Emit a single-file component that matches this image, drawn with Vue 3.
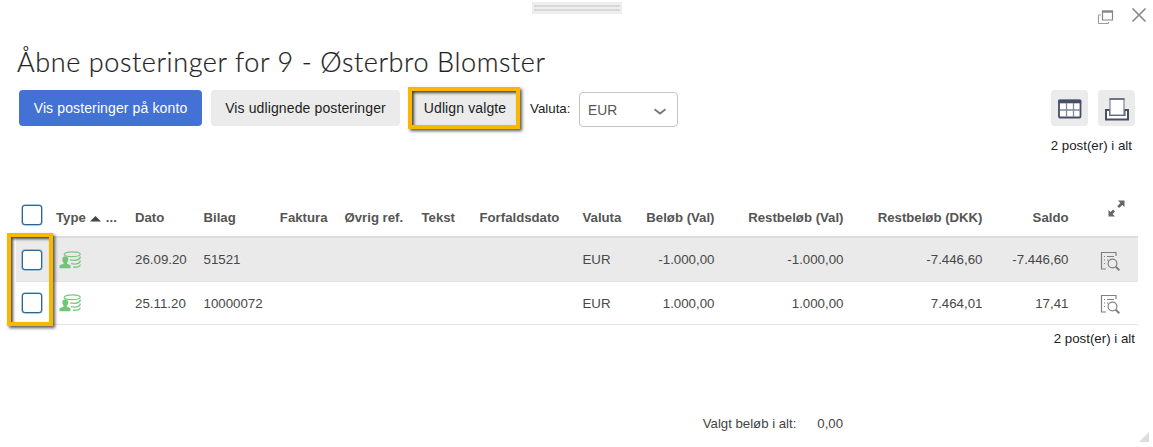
<script setup>
const columns = [
  { key: 'dato', label: 'Dato' },
  { key: 'bilag', label: 'Bilag' },
  { key: 'faktura', label: 'Faktura', cls: 'num' },
  { key: 'ref', label: 'Øvrig ref.', cls: 'ref' },
  { key: 'tekst', label: 'Tekst' },
  { key: 'forfald', label: 'Forfaldsdato' },
  { key: 'valuta', label: 'Valuta' },
  { key: 'belob', label: 'Beløb (Val)', cls: 'num' },
  { key: 'rest', label: 'Restbeløb (Val)', cls: 'num' },
  { key: 'restDkk', label: 'Restbeløb (DKK)', cls: 'num' },
  { key: 'saldo', label: 'Saldo', cls: 'num' },
]
const rows = [
  { dato: '26.09.20', bilag: '51521', valuta: 'EUR', belob: '-1.000,00', rest: '-1.000,00', restDkk: '-7.446,60', saldo: '-7.446,60' },
  { dato: '25.11.20', bilag: '10000072', valuta: 'EUR', belob: '1.000,00', rest: '1.000,00', restDkk: '7.464,01', saldo: '17,41' },
]
</script>

<template>
  <main class="window">
    <div class="handle"><i></i><i></i></div>
    <div class="controls">
      <svg width="17" height="15" viewBox="0 0 17 15" fill="none" stroke="#858585">
        <path d="M5.500 1.500h10v8.500h-10z" stroke-width="1.200" /><path d="M5 1.500h11" stroke-width="2.400" />
        <path d="M4 5H1.500v8.500h10v-1.500" stroke="#999" />
      </svg>
      <svg width="16" height="16" viewBox="0 0 16 16" fill="none" stroke="#8a8a8a" stroke-width="1.700"><path d="M1.500 1.500l13 13M14.500 1.500l-13 13" /></svg>
    </div>

    <h1>Åbne posteringer for 9 - Østerbro Blomster</h1>

    <div class="toolbar">
      <button class="btn primary">Vis posteringer på konto</button>
      <button class="btn second">Vis udlignede posteringer</button>
      <button class="btn third">Udlign valgte</button>
      <span class="label">Valuta:</span>
      <div class="select">
        <span>EUR</span>
        <svg width="14" height="8" viewBox="0 0 14 8" fill="none" stroke="#777" stroke-width="1.800"><path d="M1.500 1.200L7 5.500l5.500-4.300" /></svg>
      </div>
      <div class="tools">
        <button class="tool">
          <svg width="24" height="20" viewBox="0 0 24 20"><rect x="1" y="1.500" width="21.500" height="17" rx="1" fill="#fff" stroke="#484e66" stroke-width="1.800" /><path d="M.2 2.500h23" stroke="#484e66" stroke-width="3.600" /><path d="M8.500 4v14M15.500 4v14M2 11h20" stroke="#8287a0" stroke-width="1.300" /></svg>
        </button>
        <button class="tool">
          <svg width="26" height="24" viewBox="0 0 26 24"><path d="M6 13H2v9.500h22V13h-3.500v5H6z" fill="#fff" stroke="#484e66" stroke-width="2" /><path d="M6 2h14v16H6z" fill="#fff" stroke="#8084a0" stroke-width="1.200" /><path d="M5.500 2h15" stroke="#484e66" stroke-width="1.300" /></svg>
        </button>
      </div>
    </div>
    <div class="count top">2 post(er) i alt</div>

    <section class="table">
      <div class="row head">
        <div><span class="check"></span></div>
        <div class="type">Type<svg width="11" height="6" viewBox="0 0 11 6"><path d="M5.500 0L11 5.500H0z" fill="#444" /></svg><span>...</span></div>
        <div v-for="c in columns" :key="c.key" :class="c.cls">{{ c.label }}</div>
        <div class="action expand">
          <svg width="17" height="17" viewBox="0 0 17 17" fill="#666">
            <path d="M10 .5h6.500V7l-2.100-2.100-3.300 3.200-1.900-1.900 3.200-3.300zM7 16.500H.5V10l2.100 2.100 2.500-2.500L7 11.500l-2.400 2.600z" />
          </svg>
        </div>
      </div>
      <div v-for="(r, i) in rows" :key="r.bilag" class="row entry" :class="{ shaded: i === 0 }">
        <div><span class="check"></span></div>
        <div class="kind">
          <svg width="23" height="18" viewBox="0 0 23 18">
            <g fill="none" stroke="#7cc87e" stroke-width="1.300"><ellipse cx="13.200" cy="3.300" rx="8" ry="2.400" /><path d="M21.300 5.500c0 4-5.500 4.200-10.300 3.400M21.300 9.500c0 3.500-4.500 4-9.300 3.200M21.300 13.500c0 2.500-3.500 3-7.300 2.600" /></g>
            <path d="M6.300 5.200c2 0 3.100 1.300 3 3.200-.1 1.500-.7 2.300-1.200 3.100v1.300l3.300 1.500v2.900H.5v-2.900l4-1.500v-1.300c-.6-.8-1.100-1.600-1.200-3.100-.1-1.900 1-3.200 3-3.200z" fill="#72c476" />
          </svg>
        </div>
        <div v-for="c in columns" :key="c.key" :class="c.cls">{{ r[c.key] }}</div>
        <div class="action">
          <svg width="20" height="20" viewBox="0 0 20 20" fill="none" stroke="#808080">
            <path d="M6 18H1.500V1.500H16V5M1 1.500h15.500" stroke-width="1.200" /><path d="M4 5.500h1M4 9h1M4 12.500h1M7 5.500h7M7 9h1.500" />
            <circle cx="12.500" cy="12.500" r="4.400" stroke-width="1.200" /><path d="M15.800 15.800l3.500 3.500" stroke-width="2" />
          </svg>
        </div>
      </div>
    </section>
    <div class="count bottom">2 post(er) i alt</div>
    <footer><span>Valgt beløb i alt:</span><span class="sum">0,00</span></footer>

    <div class="mark mark-button"></div>
    <div class="mark mark-checks"></div>
    <div class="grip"></div>
  </main>
</template>

<style>
body { margin: 0; background: #fff; }
</style>

<style scoped>
* { box-sizing: border-box; }
.window { position: relative; width: 1153px; height: 447px; overflow: hidden; background: #fff; font: 13.3px "Liberation Sans", Arial, sans-serif; color: #222; }
.handle { position: absolute; left: 532px; top: 2px; width: 90px; height: 12px; padding: 3px 2px; background: #eee; display: flex; flex-direction: column; gap: 2px; }
.handle i { height: 2px; background: #d8d8d8; }
.controls { position: absolute; top: 5px; right: 6px; display: flex; gap: 17px; align-items: center; }
.controls svg:first-child { margin-top: 5px; }
svg { display: block; flex: none; }
h1 { margin: 0; padding: 44px 0 0 17px; height: 90px; font: 300 27px/36px Lato, sans-serif; letter-spacing: .6px; -webkit-text-stroke: .2px #222; color: #222; white-space: nowrap; }
.toolbar { height: 37px; display: flex; align-items: flex-start; padding-left: 19px; }
.btn { height: 36px; border: 0; border-radius: 4px; background: #ebebeb; color: #222; font: 14px "Liberation Sans", Arial, sans-serif; letter-spacing: .12px; padding: 0; white-space: nowrap; }
.primary { width: 183px; background: #4472d4; color: #fff; }
.second { width: 189px; margin-left: 9px; }
.third { width: 108px; margin-left: 11px; margin-right: -1px; }
.label { width: 40px; margin: 10px 0 0 12px; line-height: 18px; white-space: nowrap; }
.select { width: 99px; height: 35px; margin: 2px 0 0 9px; border: 1px solid #c4c4c4; border-radius: 4px; display: flex; align-items: center; justify-content: space-between; padding: 1px 10px 0 8px; font-size: 13.8px; color: #555; }
.select svg { margin-top: 3px; }
.tools { margin-left: auto; margin-right: 18px; display: flex; gap: 10px; }
.tool { width: 37px; height: 36px; border: 0; border-radius: 4px; background: #ebebeb; padding: 1px 0 0; display: flex; justify-content: center; align-items: center; }
.count { text-align: right; line-height: 18px; }
.top { padding: 10px 21px 0 0; height: 67px; }
.bottom { padding: 5px 18px 0 0; }
.table { width: 1122px; margin-left: 16px; color: #484848; }
.row { display: grid; grid-template-columns: 40px 79px 68.500px 69px 55px 94px 58px 103px 57px 75px 129px 139px 86px 69.500px; align-items: center; white-space: nowrap; }
.head { height: 44px; border-bottom: 2px solid #dcdcdc; font-weight: bold; font-size: 13.2px; color: #555; padding-top: 5px; }
.entry { height: 43px; border-bottom: 1px solid #e4e4e4; }
.entry.shaded { height: 44px; background: #eaeaea; }
.num { display: flex; justify-content: flex-end; }
.ref { padding-left: 17px; }
.check { display: block; width: 20px; height: 20px; margin-left: 6px; border: 1px solid #286795; box-shadow: 0 0 0 .5px #5e90b3; border-radius: 3px; background: #fff; }
.head .check { margin-top: -5px; }
.type { display: flex; align-items: center; }
.type svg { margin: 2px 5px 0 4px; }
.kind { padding-left: 3px; }
.action { padding-left: 31px; padding-top: 2px; }
.expand { padding-left: 39px; margin-top: -21px; }
footer { display: flex; justify-content: flex-end; width: 843px; margin-top: 67px; line-height: 18px; color: #444; font-size: 13.2px; }
.sum { margin-left: 21px; }
.mark { position: absolute; border: 4px solid #f9b800; box-shadow: 2px 2px 3px rgba(0, 0, 0, .65), inset 2px 2px 3px rgba(0, 0, 0, .7); }
.mark-button { left: 408px; top: 87px; width: 112px; height: 42px; }
.mark-checks { left: 7px; top: 233px; width: 46px; height: 93px; }
.grip { position: absolute; left: 1139px; top: 432px; width: 10px; height: 10px; background: #ddd; clip-path: polygon(100% 0, 100% 100%, 0 100%); }
</style>
